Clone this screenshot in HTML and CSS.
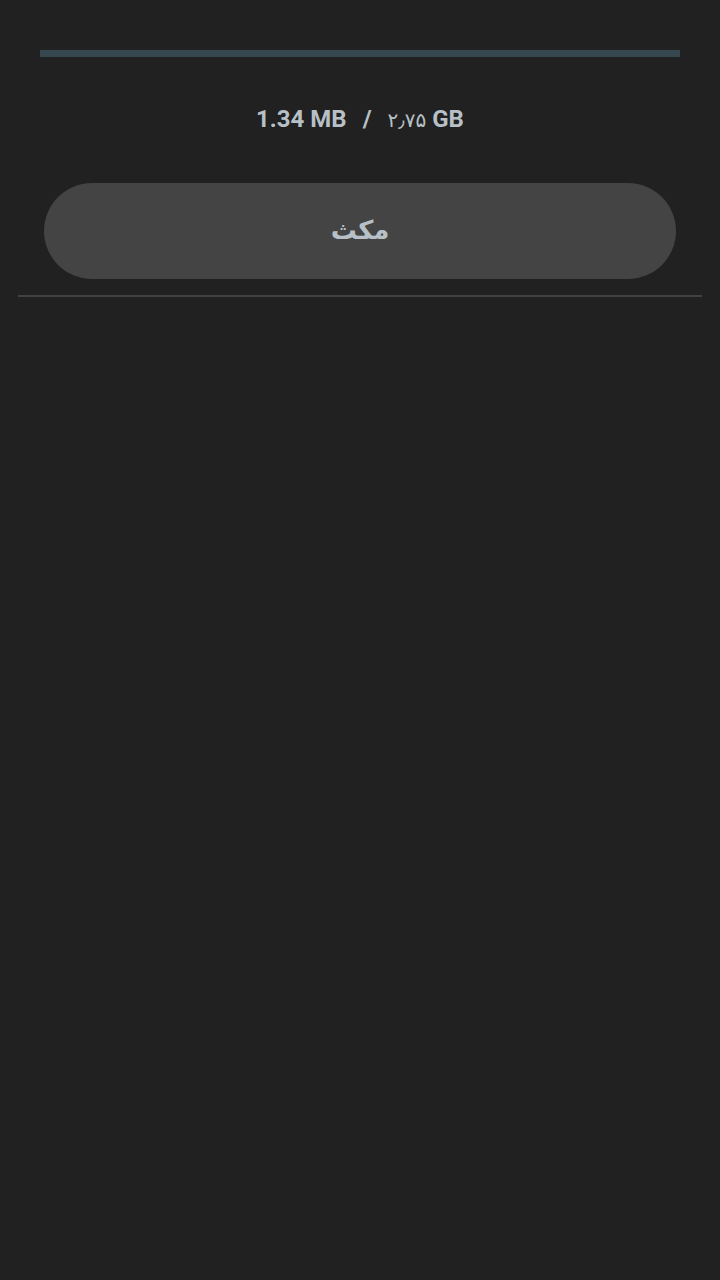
FILE: index.html
```html
<!DOCTYPE html>
<html lang="fa">
<head>
  <meta charset="UTF-8">
  <meta name="viewport" content="width=device-width, initial-scale=1.0">
  <title>Download</title>
  <link rel="stylesheet" href="styles.css">
</head>
<body>
  <div class="download-panel">
    <div class="progress">
      <div class="progress-fill" style="width: 0%"></div>
    </div>
    <div class="size-info" dir="ltr">
      <span class="size-done">1.34 MB</span>
      <span class="size-sep">/</span>
      <span class="size-total"><span class="fa-num">۲٫۷۵</span> GB</span>
    </div>
    <button class="pause-btn">مکث</button>
  </div>
  <hr class="divider">
</body>
</html>
```

FILE: styles.css
```css
body {
  margin: 0;
  background-color: #212121;
  font-family: Roboto, "DejaVu Sans", sans-serif;
}
.download-panel {
  padding: 50px 40px 0;
}
.progress {
  height: 7px;
  background-color: #37474f;
}
.progress-fill {
  height: 100%;
  background-color: #4fc3f7;
}
.size-info {
  display: flex;
  justify-content: center;
  align-items: baseline;
  gap: 16px;
  margin-top: 48px;
  font-size: 24px;
  line-height: 28px;
  font-weight: bold;
  color: #b7c0c6;
}
.fa-num {
  font-weight: normal;
  font-size: 20px;
}
.pause-btn {
  display: block;
  width: calc(100% - 8px);
  margin: 49px auto 0;
  height: 96px;
  padding-bottom: 4px;
  border: none;
  border-radius: 48px;
  background-color: #444444;
  color: #b7c0c6;
  font-family: "DejaVu Sans", sans-serif;
  font-size: 26px;
  font-weight: bold;
}
.divider {
  margin: 16px 18px 0;
  border: none;
  height: 2px;
  background-color: #424242;
}
```
